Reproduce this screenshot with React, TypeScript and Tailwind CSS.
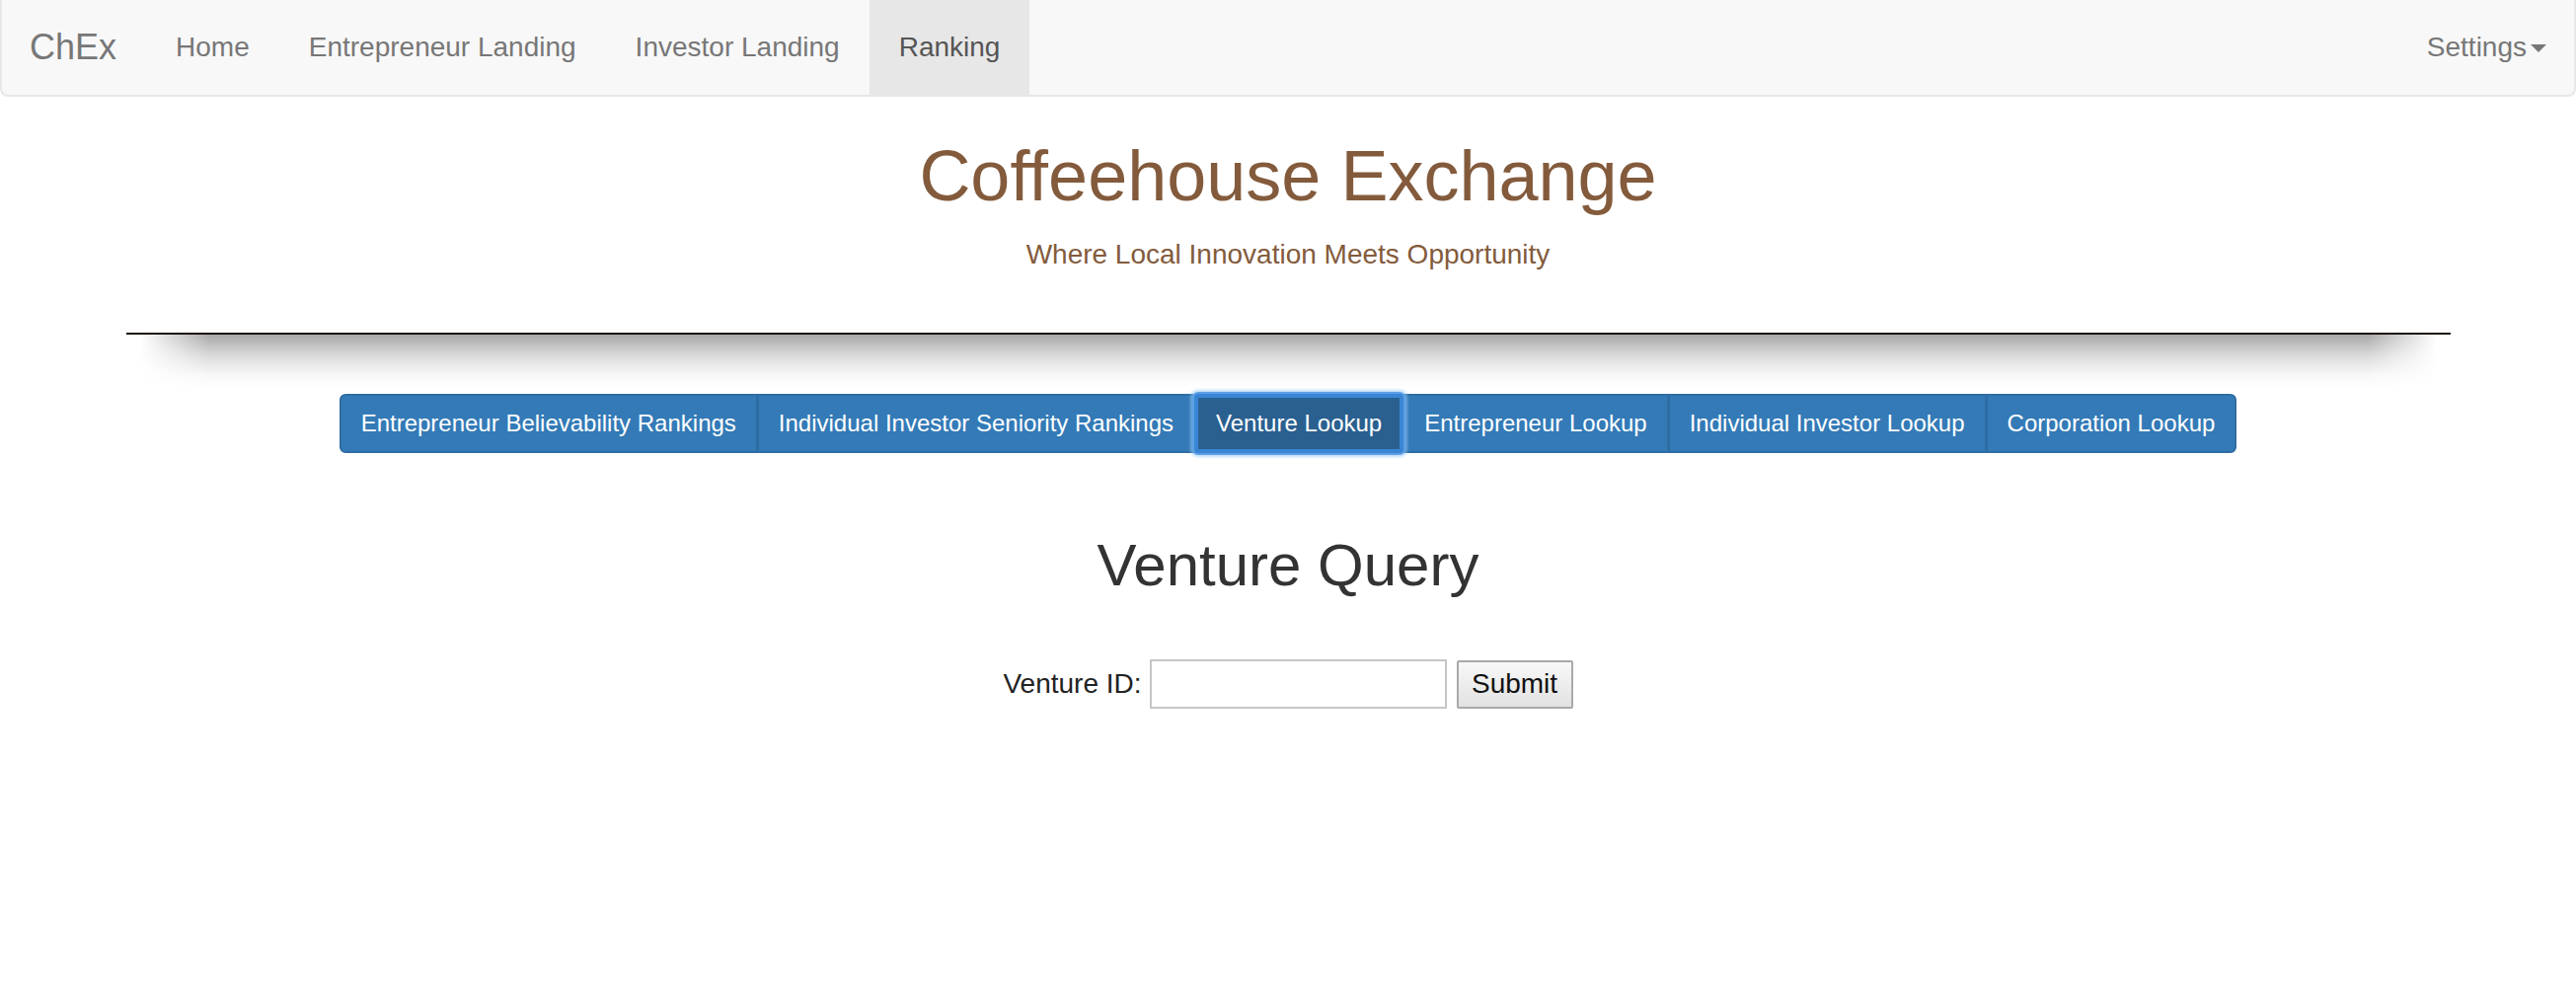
import React from "react";

const navLinks = [
  { label: "Home", active: false },
  { label: "Entrepreneur Landing", active: false },
  { label: "Investor Landing", active: false },
  { label: "Ranking", active: true },
];

const lookupButtons = [
  { label: "Entrepreneur Believability Rankings", active: false },
  { label: "Individual Investor Seniority Rankings", active: false },
  { label: "Venture Lookup", active: true },
  { label: "Entrepreneur Lookup", active: false },
  { label: "Individual Investor Lookup", active: false },
  { label: "Corporation Lookup", active: false },
];

function Navbar() {
  return (
    <nav className="flex h-[98px] justify-between rounded-b-[8px] border-x-2 border-b-2 border-[#e7e7e7] bg-[#f8f8f8]">
      <div className="flex h-[96px] items-stretch">
        <a className="flex items-center pl-[28px] pr-[30px] text-[36px] text-[#777]">ChEx</a>
        {navLinks.map((link) => (
          <a
            key={link.label}
            className={`flex items-center px-[30px] text-[28px] ${
              link.active ? "bg-[#e7e7e7] text-[#555]" : "text-[#777]"
            }`}
          >
            {link.label}
          </a>
        ))}
      </div>
      <a className="flex h-[96px] items-center pl-[30px] pr-[28px] text-[28px] text-[#777]">
        Settings
        <span className="ml-[4px] mt-[2px] h-0 w-0 border-x-[8px] border-t-[8px] border-x-transparent border-t-[#777]" />
      </a>
    </nav>
  );
}

function LookupGroup() {
  return (
    <div className="flex justify-center">
      <div className="flex">
        {lookupButtons.map((btn, i) => {
          const first = i === 0;
          const last = i === lookupButtons.length - 1;
          return (
            <button
              key={btn.label}
              className={`h-[60px] whitespace-nowrap border-2 px-[20px] text-[24px] leading-[36px] text-white ${
                first ? "rounded-l-[6px]" : "-ml-[1px]"
              } ${last ? "rounded-r-[6px]" : ""} ${
                btn.active
                  ? "relative z-10 rounded-[4px] border-[#3a86d6] bg-[#2a6090] shadow-[inset_0_0_0_2px_#3a86d6,0_0_0_2px_#5d9fe6,0_0_3px_4px_rgba(150,200,245,0.6)]"
                  : "border-[#2e6da4] bg-[#337ab7]"
              }`}
            >
              {btn.label}
            </button>
          );
        })}
      </div>
    </div>
  );
}

export default function App() {
  return (
    <div className="min-h-screen bg-white font-['Liberation_Sans',Arial,sans-serif]">
      <Navbar />

      <header className="text-center text-[#835b3c]">
        <h1 className="mt-[41px] text-[72px] font-normal leading-[79px]">Coffeehouse Exchange</h1>
        <p className="mt-[20px] text-[28px] leading-[40px]">Where Local Innovation Meets Opportunity</p>
      </header>

      {/* divider with soft shadow */}
      <div className="mx-auto mt-[59px] w-[2355px]">
        <div className="h-[2px] bg-[#1e140d]" />
        <div className="mx-[14px] h-[54px] bg-[linear-gradient(to_bottom,rgba(0,0,0,0.34),rgba(0,0,0,0.14)_40%,rgba(0,0,0,0.03)_75%,rgba(0,0,0,0))] [mask-image:linear-gradient(to_right,transparent,#000_70px,#000_calc(100%_-_70px),transparent)]" />
      </div>

      <div className="mt-[6px]">
        <LookupGroup />
      </div>

      <h2 className="mt-[81px] text-center text-[60px] font-normal leading-[66px] text-[#333]">Venture Query</h2>

      <form className="mt-[62px] flex h-[50px] items-center justify-center text-[28px] text-[#222]">
        <label htmlFor="ventureId">Venture ID:</label>
        <input
          id="ventureId"
          type="text"
          className="ml-[8px] h-[50px] w-[301px] border-2 border-[#c6c6c6] bg-white px-[4px] outline-none"
        />
        <button
          type="button"
          className="ml-[10px] h-[49px] w-[118px] rounded-[2px] border-2 border-[#a9a9a9] bg-[linear-gradient(to_bottom,#f8f8f8,#e2e2e2)] text-[28px] text-[#111]"
        >
          Submit
        </button>
      </form>
    </div>
  );
}
